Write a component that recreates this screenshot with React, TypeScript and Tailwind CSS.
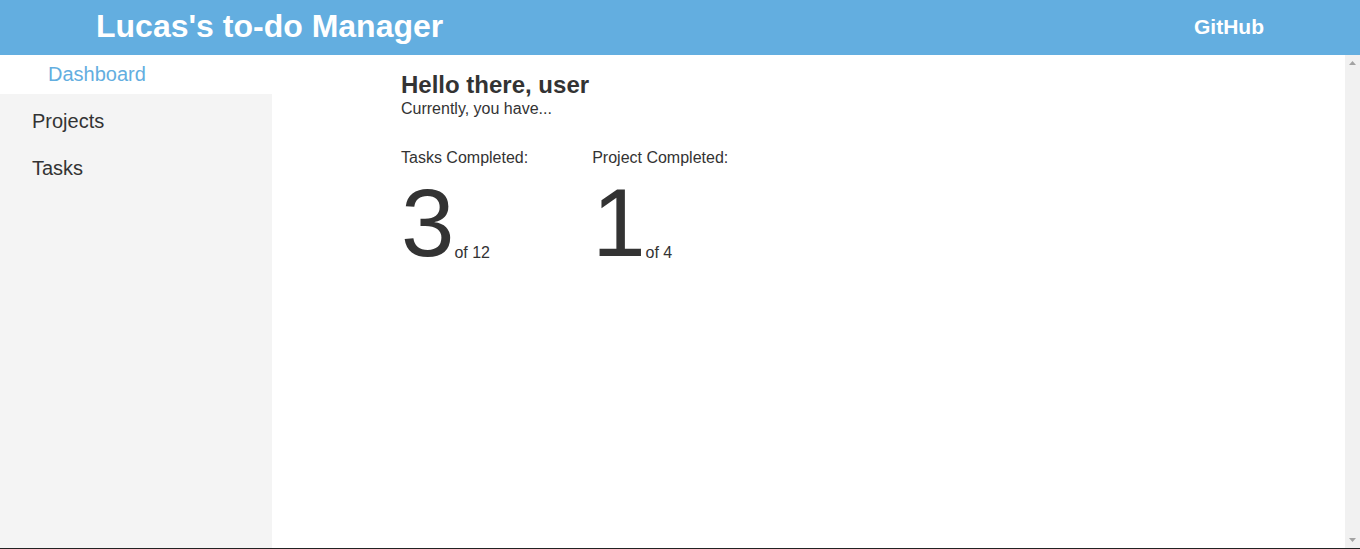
const stats = [
  { label: "Tasks Completed:", done: 3, total: 12 },
  { label: "Project Completed:", done: 1, total: 4 },
];

const nav = ["Projects", "Tasks"];

export default function App() {
  return (
    <div className="flex h-[549px] flex-col border-b border-[#222] font-['Liberation_Sans',Arial,sans-serif] text-[#333]">
      <header className="flex h-[55px] shrink-0 items-center justify-between bg-[#63aee0] pb-[2px] pl-[96px] pr-[96px] text-white">
        <h1 className="text-[32px] font-bold leading-[37px]">Lucas's to-do Manager</h1>
        <a className="text-[21px] font-bold leading-[23px]">GitHub</a>
      </header>

      <div className="flex min-h-0 flex-1">
        <aside className="w-[272px] shrink-0 bg-[#f4f4f4]">
          <div className="bg-white py-2 pl-[48px] text-[20px] leading-[23px] text-[#63aee0]">Dashboard</div>
          <ul className="pt-[4px]">
            {nav.map((n) => (
              <li key={n} className="py-3 pl-[32px] text-[20px] leading-[23px]">
                {n}
              </li>
            ))}
          </ul>
        </aside>

        <main className="flex-1 pl-[129px] pt-[16px]">
          <h2 className="text-[24px] font-bold leading-[28px]">Hello there, user</h2>
          <p className="mt-[1px] text-[16px] leading-[18px]">Currently, you have...</p>

          <div className="mt-[31px] flex gap-16">
            {stats.map((s) => (
              <div key={s.label}>
                <div className="text-[16px] leading-[18px]">{s.label}</div>
                <div className="mt-[8px] flex items-baseline">
                  <span className="text-[96px] leading-none">{s.done}</span>
                  <span className="relative top-[2px] text-[16px] leading-[18px]">of {s.total}</span>
                </div>
              </div>
            ))}
          </div>
        </main>

        {/* scrollbar track */}
        <div className="flex w-[15px] shrink-0 flex-col items-center justify-between bg-[#f1f1f1] py-[6px]">
          <svg width="7" height="4" viewBox="0 0 7 4">
            <path d="M3.5 0L7 4H0Z" fill="#a3a3a3" />
          </svg>
          <svg width="7" height="4" viewBox="0 0 7 4">
            <path d="M0 0H7L3.5 4Z" fill="#a3a3a3" />
          </svg>
        </div>
      </div>
    </div>
  );
}
